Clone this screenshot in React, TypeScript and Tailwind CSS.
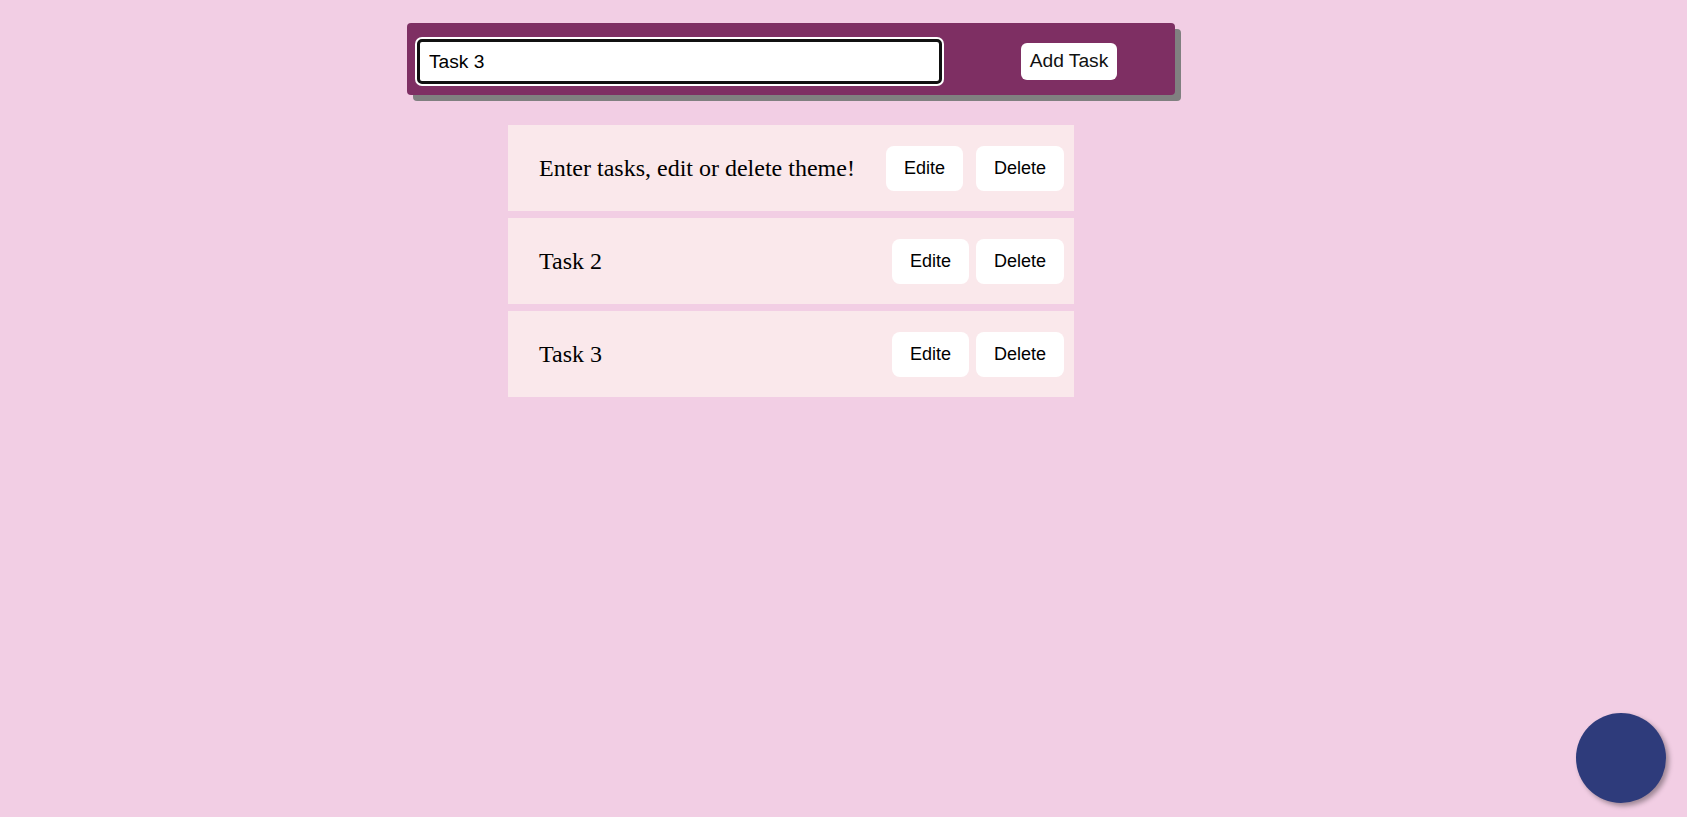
import { useState } from "react";

type Task = { id: number; text: string; gap: string };

const initialTasks: Task[] = [
  { id: 1, text: "Enter tasks, edit or delete theme!", gap: "gap-[13px]" },
  { id: 2, text: "Task 2", gap: "gap-[7px]" },
  { id: 3, text: "Task 3", gap: "gap-[7px]" },
];

const TaskRow: React.FC<{ task: Task }> = ({ task }) => {
  return (
    <li className="flex h-[86px] items-center justify-between bg-[#fae8eb] pl-[31px] pr-[10px]">
      <p className="text-[24px] text-black font-['Liberation_Serif','Times_New_Roman',serif]">
        {task.text}
      </p>
      <div className={`flex items-center ${task.gap}`}>
        <button className="h-[45px] rounded-lg bg-white px-[18px] text-[18px] text-black font-['Liberation_Sans',Arial,sans-serif]">
          Edite
        </button>
        <button className="h-[45px] rounded-lg bg-white px-[18px] text-[18px] text-black font-['Liberation_Sans',Arial,sans-serif]">
          Delete
        </button>
      </div>
    </li>
  );
};

export default function App() {
  const [value, setValue] = useState("Task 3");

  return (
    <div className="relative min-h-screen w-full bg-[#f2cee4]">
      <div className="flex w-[1582px] flex-col items-center pt-[23px]">
        <div className="flex h-[72px] w-[768px] items-center rounded-[4px] bg-[#7e2f63] pl-[10px] pt-[5px] shadow-[6px_6px_0_#808080]">
          <input
            autoFocus
            value={value}
            onChange={(e) => setValue(e.target.value)}
            className="h-[45px] w-[525px] rounded-[5px] border-[3px] border-[#111] bg-white px-[9px] text-[19.2px] text-black caret-black outline-none ring-2 ring-white font-['Liberation_Sans',Arial,sans-serif]"
          />
          <button className="ml-[79px] h-[37px] w-[96px] rounded-md bg-white text-[19.2px] text-[#111] font-['Liberation_Sans',Arial,sans-serif]">
            Add Task
          </button>
        </div>

        <ul className="mt-[30px] flex w-[566px] flex-col gap-[7px]">
          {initialTasks.map((task) => (
            <TaskRow key={task.id} task={task} />
          ))}
        </ul>
      </div>

      <button className="fixed bottom-[14px] right-[21px] h-[90px] w-[90px] rounded-full bg-[#2e3b7b] shadow-[3px_3px_5px_rgba(0,0,0,0.35)]" />
    </div>
  );
}
